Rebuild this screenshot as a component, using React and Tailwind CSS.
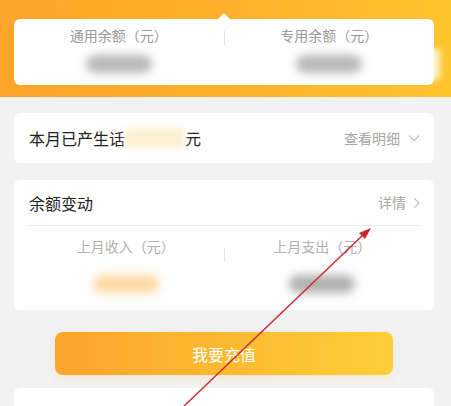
import React from 'react';

const font = { fontFamily: '"Noto Sans CJK SC", "Noto Sans", sans-serif' };

const Blur = ({ color = 'bg-[#b8b8b8]', w = 'w-[66px]' }) => (
  <div className={`${w} h-[18px] rounded-full ${color} blur-[5px]`}></div>
);

const App = () => {
  return (
    <div className="relative w-[451px] h-[406px] overflow-hidden bg-[#f2f2f2]" style={font}>
      {/* orange header */}
      <div className="relative h-[97px] pl-[14px] pr-[17px] pt-[19px] bg-gradient-to-r from-[#ffa42a] via-[#ffb02a] to-[#ffc52e]">
        <div className="absolute left-[218px] top-[13px] w-0 h-0 border-l-[6px] border-r-[6px] border-b-[6px] border-l-transparent border-r-transparent border-b-white"></div>
        <div className="relative flex h-[66px] rounded-md bg-white">
          <div className="flex-1 flex flex-col items-center pt-[6px] gap-[9px]">
            <span className="text-[14px] text-[#9a9a9a]">通用余额（元）</span>
            <Blur />
          </div>
          <div className="w-px h-[14px] mt-[12px] bg-[#dedede]"></div>
          <div className="flex-1 flex flex-col items-center pt-[6px] gap-[9px]">
            <span className="text-[14px] text-[#9a9a9a]">专用余额（元）</span>
            <Blur />
          </div>
          <div className="absolute right-[-6px] top-[30px] w-[16px] h-[30px] bg-white/80 blur-[3px]"></div>
        </div>
      </div>

      {/* monthly fee */}
      <div className="ml-[14px] mr-[17px] mt-[16px] h-[50px] rounded-md bg-white flex items-center justify-between pl-[15px] pr-[14px]">
        <div className="flex items-center text-[16px] text-[#222]">
          <span>本月已产生话</span>
          <span className="w-[60px] h-[20px] bg-[#fbf0d2] blur-[3px]"></span>
          <span>元</span>
        </div>
        <div className="flex items-center gap-[8px] text-[14px] text-[#a5a5a5]">
          <span>查看明细</span>
          <svg width="12" height="8" viewBox="0 0 12 8" fill="none" stroke="#c4c4c4" strokeWidth="1.3">
            <path d="M1 1.5l5 5 5-5" />
          </svg>
        </div>
      </div>

      {/* balance change */}
      <div className="ml-[14px] mr-[17px] mt-[17px] h-[130px] rounded-md bg-white px-[14px]">
        <div className="h-[46px] flex items-center justify-between border-b border-[#ececec] pl-px">
          <span className="text-[16px] text-[#222]">余额变动</span>
          <div className="flex items-center gap-[7px] text-[14px] text-[#a5a5a5]">
            <span>详情</span>
            <svg width="7" height="12" viewBox="0 0 7 12" fill="none" stroke="#c4c4c4" strokeWidth="1.3">
              <path d="M1 1l5 5-5 5" />
            </svg>
          </div>
        </div>
        <div className="flex">
          <div className="flex-1 flex flex-col items-center pt-[10px] gap-[18px]">
            <span className="text-[14px] text-[#b0b0b0]">上月收入（元）</span>
            <Blur color="bg-[#fcd9a4]" />
          </div>
          <div className="w-px h-[14px] mt-[22px] bg-[#e6e6e6]"></div>
          <div className="flex-1 flex flex-col items-center pt-[10px] gap-[18px]">
            <span className="text-[14px] text-[#b0b0b0]">上月支出（元）</span>
            <Blur color="bg-[#b0b0b0]" />
          </div>
        </div>
      </div>

      {/* recharge button */}
      <div className="ml-[55px] mr-[58px] mt-[22px] h-[43px] rounded-lg bg-gradient-to-r from-[#fba42c] to-[#fece38] flex items-center justify-center shadow-[0_4px_10px_rgba(250,170,60,0.15)]">
        <span className="text-[16px] text-white">我要充值</span>
      </div>

      {/* next card */}
      <div className="ml-[14px] mr-[17px] mt-[13px] h-[40px] rounded-md bg-white"></div>

      {/* red annotation arrow */}
      <svg className="absolute left-0 top-0 pointer-events-none" width="451" height="406" viewBox="0 0 451 406">
        <line x1="182" y1="408" x2="364" y2="234" stroke="#c8272b" strokeWidth="1.4" />
        <path d="M371 228 L359 233 L365 239 Z" fill="#c8272b" />
      </svg>
    </div>
  );
};

export default App;
